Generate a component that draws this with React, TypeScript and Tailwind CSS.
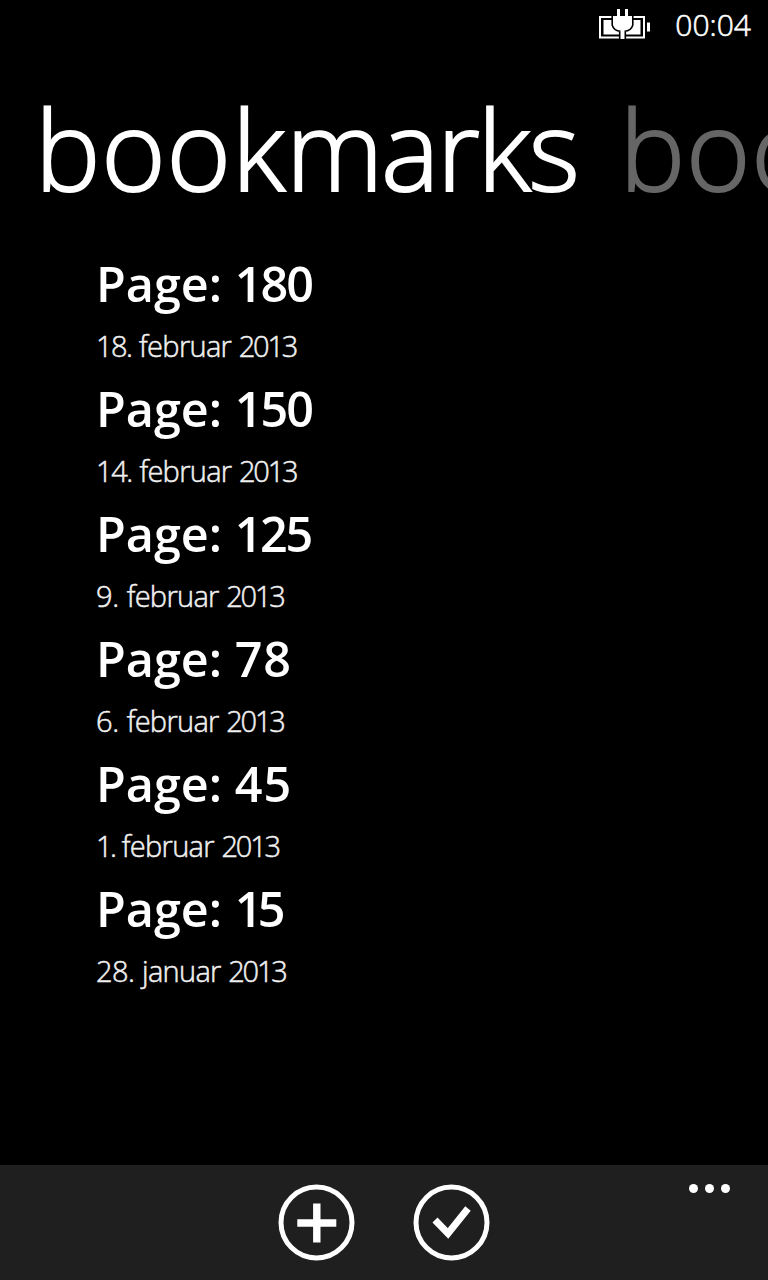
type Bookmark = { page: string; day: string; month: string; dayTracking: string; pageTracking: string };

const bookmarks: Bookmark[] = [
  { page: '180', day: '18.', month: 'februar', dayTracking: 'tracking-[-1.5px]', pageTracking: 'tracking-[-1.9px]' },
  { page: '150', day: '14.', month: 'februar', dayTracking: 'tracking-[-1.4px]', pageTracking: 'tracking-[-1.9px]' },
  { page: '125', day: '9.', month: 'februar', dayTracking: 'tracking-[-0.2px]', pageTracking: 'tracking-[-2.3px]' },
  { page: '78', day: '6.', month: 'februar', dayTracking: 'tracking-[-0.2px]', pageTracking: 'tracking-[0.8px]' },
  { page: '45', day: '1.', month: 'februar', dayTracking: 'tracking-[-2.6px]', pageTracking: 'tracking-[1.2px]' },
  { page: '15', day: '28.', month: 'januar', dayTracking: 'tracking-[-0.5px]', pageTracking: 'tracking-[-4.6px]' },
];

function BatteryIcon() {
  return (
    <svg className="mt-[9px] h-[30px] w-[52px]" viewBox="0 0 52 30" aria-hidden="true">
      <path d="M1 8H45V28.5H1Z" fill="none" stroke="#fff" strokeWidth="2" />
      <path d="M4.5 11H41.5V25.5H4.5Z" fill="#fff" />
      <path d="M48 13.5H51V22.5H48Z" fill="#fff" />
      <path
        d="M18 0H21V7H26V0H29V7H33V16Q31.5 21 25.5 21.5V30H21.5V21.5Q15.5 21 14 16V7H18Z"
        fill="#fff"
        stroke="#000"
        strokeWidth="3.2"
        paintOrder="stroke"
      />
    </svg>
  );
}

export default function App() {
  return (
    <div className="flex h-[1280px] w-[768px] flex-col overflow-hidden bg-black font-['Open_Sans',sans-serif] text-white">
      <header className="flex h-[50px] justify-end gap-6 pr-[17px]">
        <BatteryIcon />
        <span className="text-[30px] font-light leading-[50px] [-webkit-text-stroke:0.6px_white]">00:04</span>
      </header>
      <h1 className="flex h-[200px] gap-[42px] pl-[35px] pt-[28px] text-[110px] font-light leading-[141px] whitespace-nowrap">
        <span className="[-webkit-text-stroke:2px_white]">
          <span className="tracking-[0.8px]">book</span>
          <span className="tracking-[-2.2px]">marks</span>
        </span>
        <span className="tracking-[0.8px] text-[#666] [-webkit-text-stroke:2px_#666]">book</span>
      </h1>
      <main className="flex-1 pl-24">
        {bookmarks.map((b) => (
          <section key={b.page} className="h-[125px]">
            <h2 className="h-[70px] text-[48.5px] font-semibold leading-[67px]">
              <span>Page: </span>
              <span className={b.pageTracking}>{b.page}</span>
            </h2>
            <p className="text-[29px] font-light leading-[52px] text-[#f0f0f0] [-webkit-text-stroke:0.5px_#f0f0f0]">
              <span className={b.dayTracking}>{b.day}</span>{' '}
              <span className="tracking-[-0.7px]">{b.month}</span>{' '}
              <span className="tracking-[-2.2px]">2013</span>
            </p>
          </section>
        ))}
      </main>
      <footer className="relative h-[115px] bg-[#1f1f1f]">
        <div className="flex justify-center gap-[58px] pt-[19px]">
          <button aria-label="add" className="h-[77px] w-[77px]">
            <svg viewBox="0 0 77 77" fill="none" stroke="#fff">
              <circle cx="38.5" cy="38.5" r="35.5" strokeWidth="5" />
              <path d="M38.8 19.5V58.5M19.3 39H58.3" strokeWidth="7.4" />
            </svg>
          </button>
          <button aria-label="select" className="h-[77px] w-[77px]">
            <svg viewBox="0 0 77 77" fill="none" stroke="#fff">
              <circle cx="38.5" cy="38.5" r="35.5" strokeWidth="5" />
              <path d="M22 36L35 49.5L55 24.5" strokeWidth="7" />
            </svg>
          </button>
        </div>
        <button aria-label="more" className="absolute right-[38px] top-[19px] flex gap-[7px]">
          <i className="size-[9px] rounded-full bg-white" />
          <i className="size-[9px] rounded-full bg-white" />
          <i className="size-[9px] rounded-full bg-white" />
        </button>
      </footer>
    </div>
  );
}
